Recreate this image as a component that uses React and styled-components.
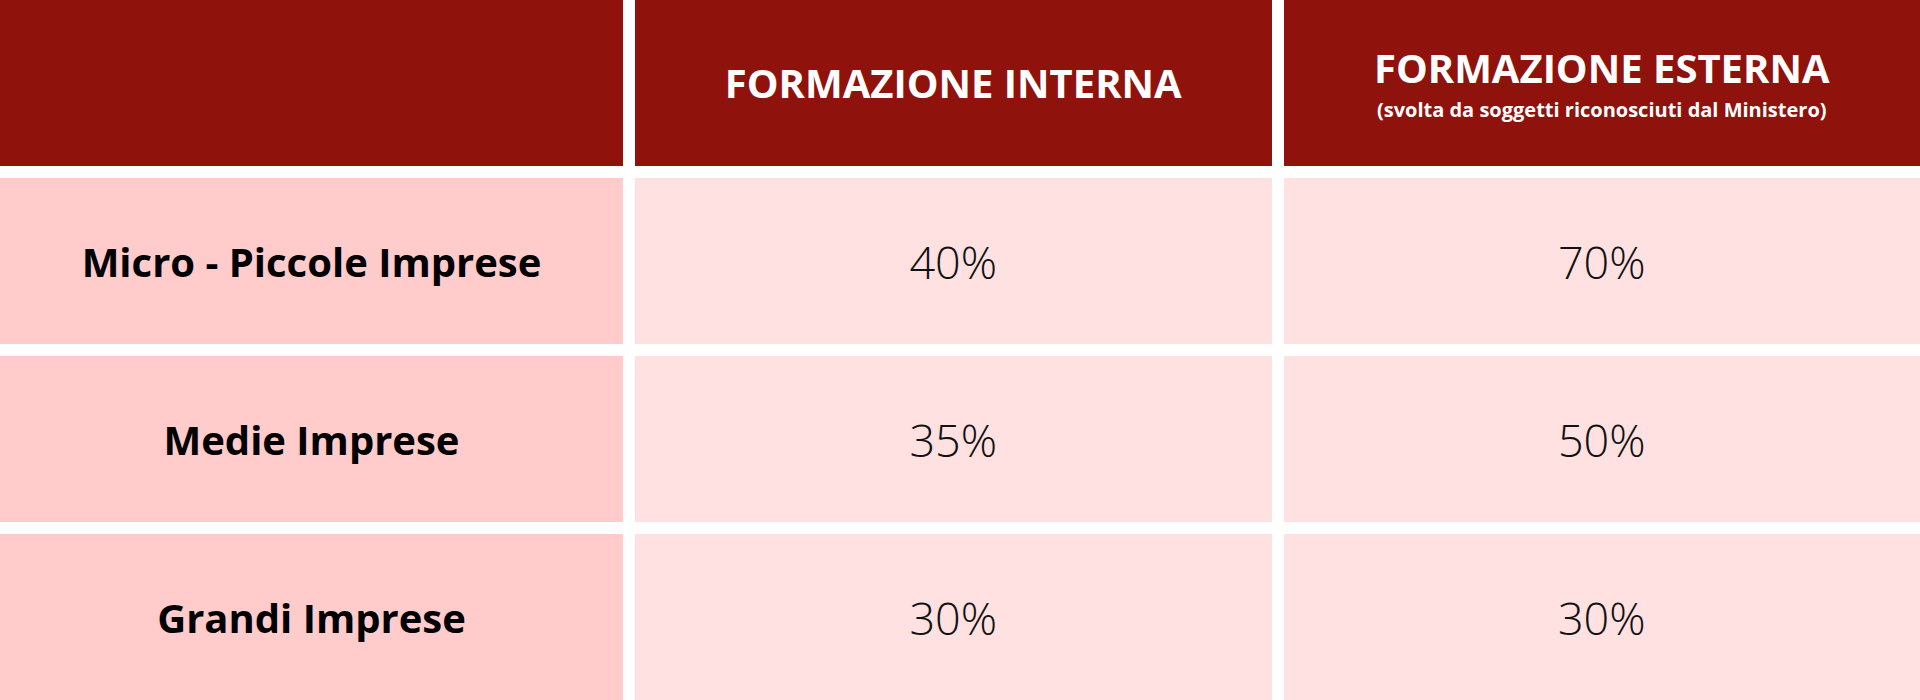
import React from "react";
import styled, { createGlobalStyle } from "styled-components";

const Global = createGlobalStyle`
  html, body { margin: 0; padding: 0; background: #ffffff; }
  body { font-family: "Open Sans", "Liberation Sans", sans-serif; }
`;

const Table = styled.div`
  display: grid;
  grid-template-columns: 623px 1fr 1fr;
  grid-template-rows: 166px repeat(3, 166px);
  gap: 12px;
  width: 1920px;
  background: #ffffff;
`;

const HeadCell = styled.div`
  background: #8f120d;
  color: #ffffff;
  display: flex;
  flex-direction: column;
  align-items: center;
  justify-content: center;
  text-align: center;
`;

const HeadTitle = styled.div`
  font-weight: 700;
  font-size: 40px;
  line-height: 1.2;
  letter-spacing: 0;
`;

const HeadSub = styled.div`
  font-weight: 700;
  font-size: 20px;
  line-height: 1.3;
  margin-top: 5px;
`;

const LabelCell = styled.div`
  background: #ffcbcb;
  color: #000000;
  display: flex;
  align-items: center;
  justify-content: center;
  font-weight: 700;
  font-size: 40px;
`;

const ValueCell = styled.div`
  background: #ffe1e1;
  color: #111111;
  display: flex;
  align-items: center;
  justify-content: center;
  font-weight: 300;
  font-size: 45px;
`;

const rows = [
  { label: "Micro - Piccole Imprese", internal: "40%", external: "70%" },
  { label: "Medie Imprese", internal: "35%", external: "50%" },
  { label: "Grandi Imprese", internal: "30%", external: "30%" },
];

export default function App() {
  return (
    <>
      <Global />
      <Table>
        <HeadCell />
        <HeadCell>
          <HeadTitle>FORMAZIONE INTERNA</HeadTitle>
        </HeadCell>
        <HeadCell>
          <HeadTitle>FORMAZIONE ESTERNA</HeadTitle>
          <HeadSub>(svolta da soggetti riconosciuti dal Ministero)</HeadSub>
        </HeadCell>
        {rows.map((r) => (
          <React.Fragment key={r.label}>
            <LabelCell>{r.label}</LabelCell>
            <ValueCell>{r.internal}</ValueCell>
            <ValueCell>{r.external}</ValueCell>
          </React.Fragment>
        ))}
      </Table>
    </>
  );
}
